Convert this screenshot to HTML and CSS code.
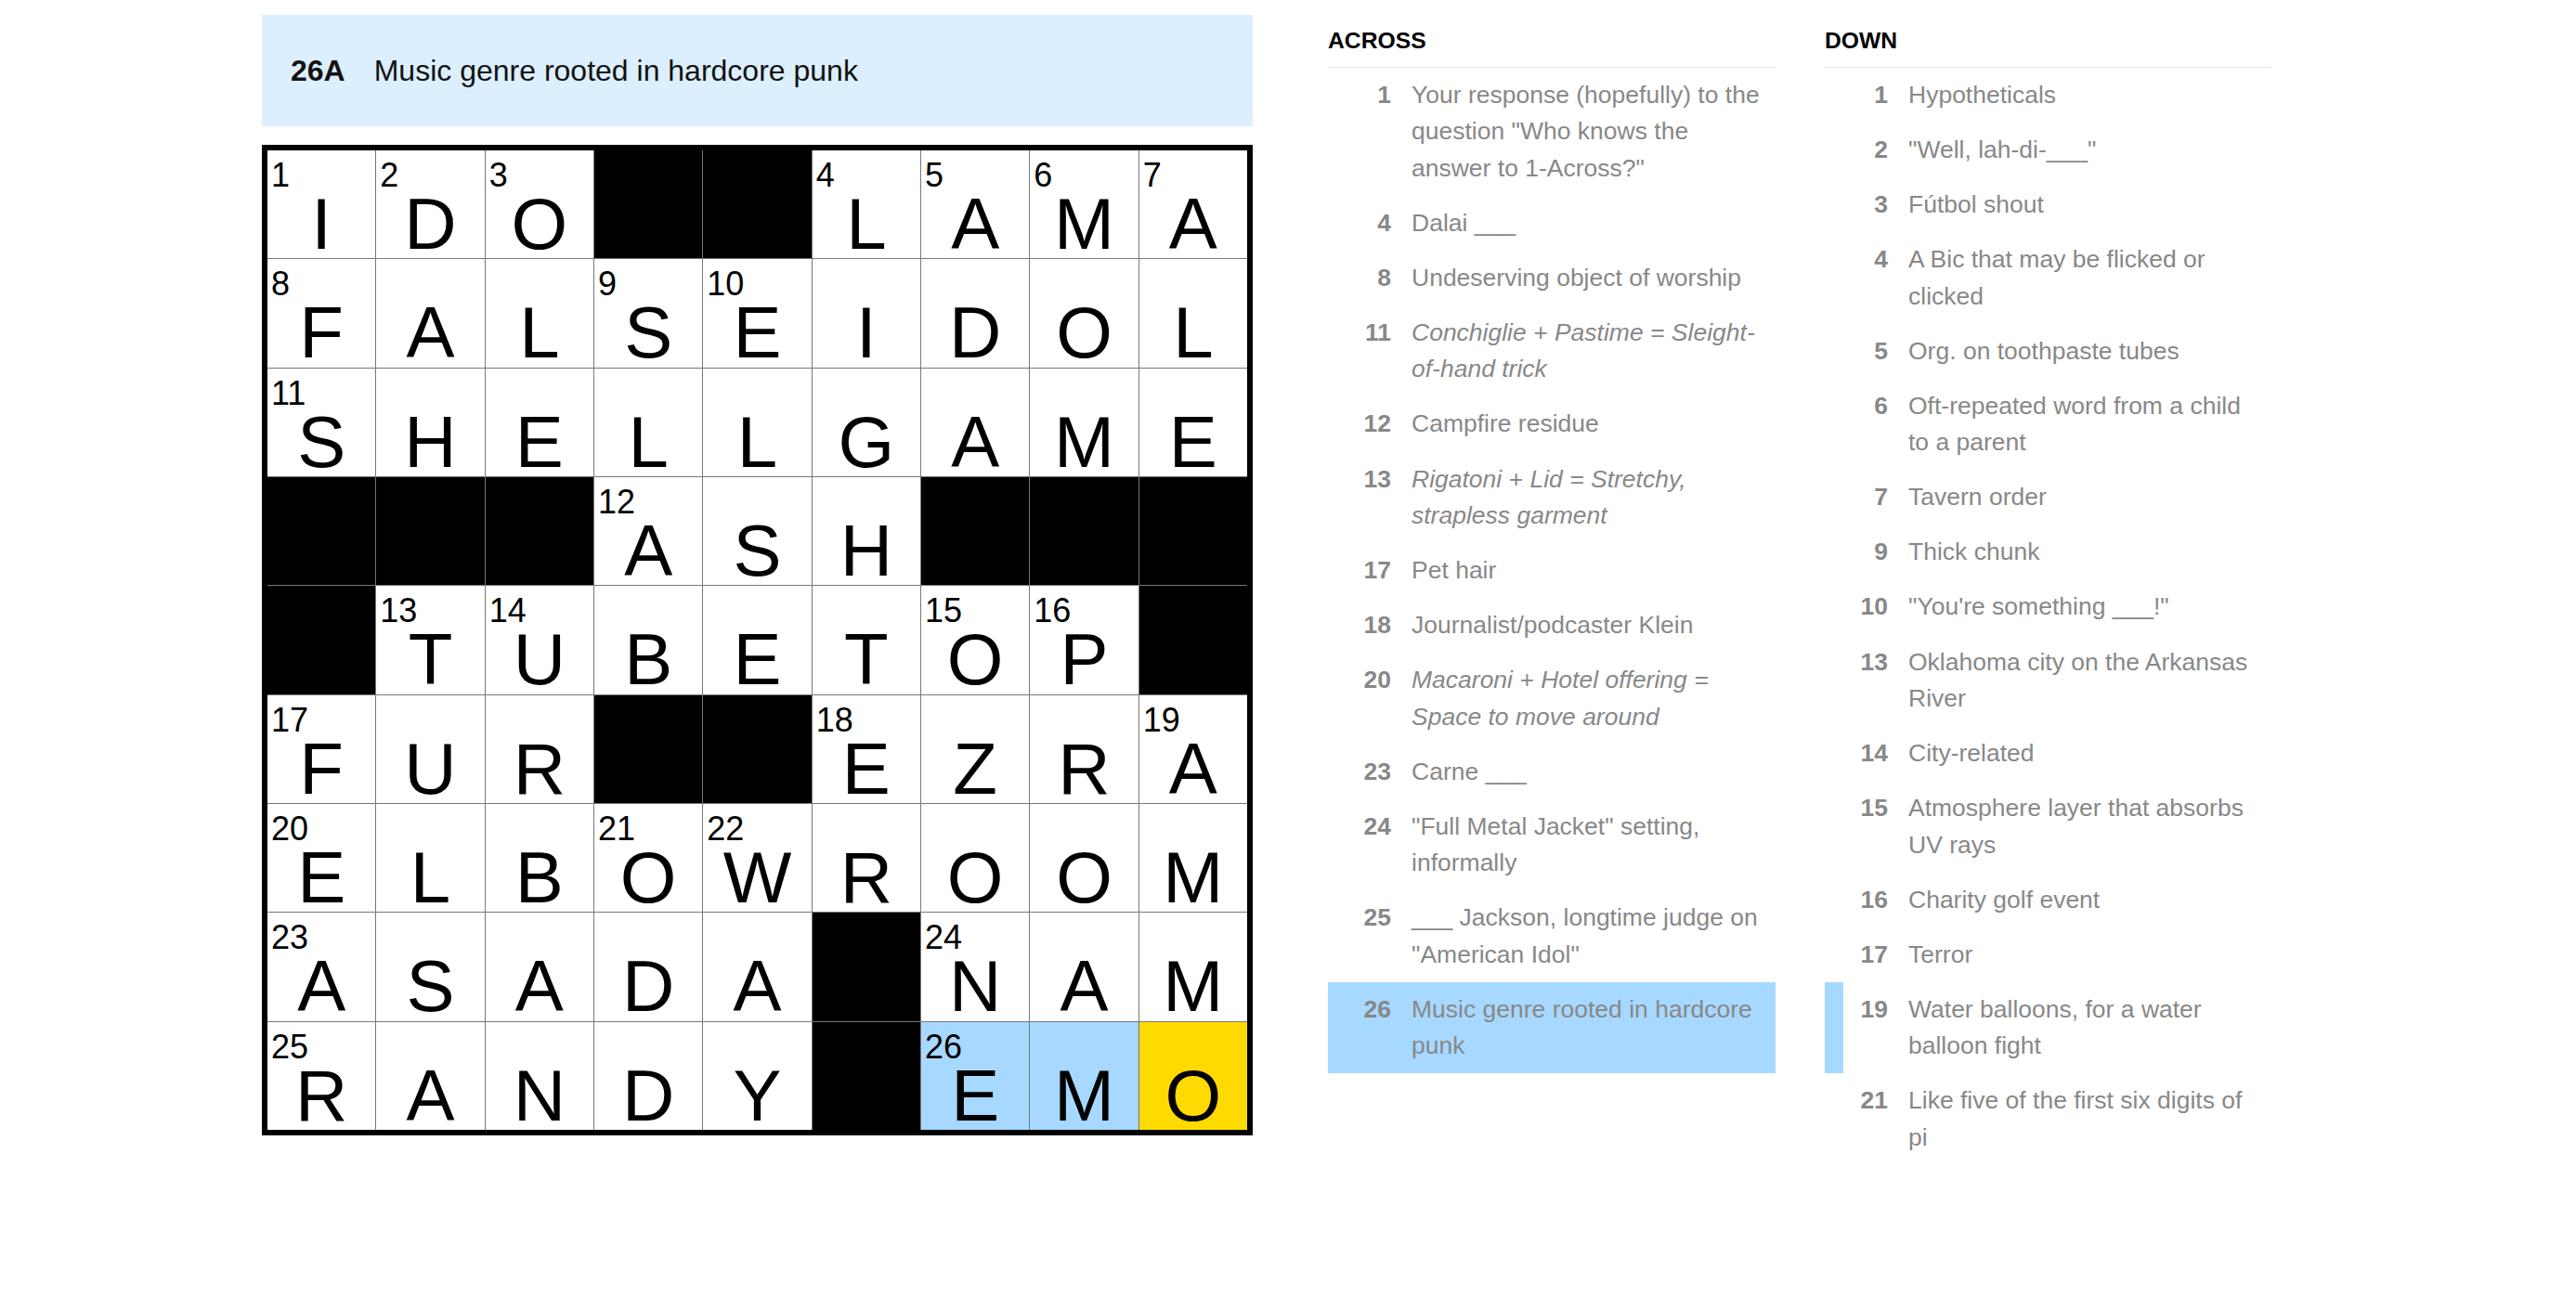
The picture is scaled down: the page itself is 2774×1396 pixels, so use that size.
FILE: index.html
```html
<!DOCTYPE html>
<html lang="en">
<head>
    <meta charset="UTF-8">
    <meta name="viewport" content="width=device-width, initial-scale=1.0">
    <title>Crossword</title>
    <link rel="stylesheet" href="styles.css">
</head>
<body>
    <div class="page">
        <div class="board">
            <div class="clue-bar">
                <span class="clue-bar-num">26A</span>
                <span class="clue-bar-text">Music genre rooted in hardcore punk</span>
            </div>
            <div class="grid" id="grid"></div>
        </div>

        <section class="clue-list">
            <h3 class="clue-list-title">Across</h3>
            <ol>
                <li class="clue"><span class="clue-label">1</span><span class="clue-text">Your response (hopefully) to the question "Who knows the answer to 1-Across?"</span></li>
                <li class="clue"><span class="clue-label">4</span><span class="clue-text">Dalai ___</span></li>
                <li class="clue"><span class="clue-label">8</span><span class="clue-text">Undeserving object of worship</span></li>
                <li class="clue"><span class="clue-label">11</span><span class="clue-text"><i>Conchiglie + Pastime = Sleight-of-hand trick</i></span></li>
                <li class="clue"><span class="clue-label">12</span><span class="clue-text">Campfire residue</span></li>
                <li class="clue"><span class="clue-label">13</span><span class="clue-text"><i>Rigatoni + Lid = Stretchy, strapless garment</i></span></li>
                <li class="clue"><span class="clue-label">17</span><span class="clue-text">Pet hair</span></li>
                <li class="clue"><span class="clue-label">18</span><span class="clue-text">Journalist/podcaster Klein</span></li>
                <li class="clue"><span class="clue-label">20</span><span class="clue-text"><i>Macaroni + Hotel offering = Space to move around</i></span></li>
                <li class="clue"><span class="clue-label">23</span><span class="clue-text">Carne ___</span></li>
                <li class="clue"><span class="clue-label">24</span><span class="clue-text">"Full Metal Jacket" setting, informally</span></li>
                <li class="clue"><span class="clue-label">25</span><span class="clue-text">___ Jackson, longtime judge on "American Idol"</span></li>
                <li class="clue clue-selected"><span class="clue-label">26</span><span class="clue-text">Music genre rooted in hardcore punk</span></li>
            </ol>
        </section>

        <section class="clue-list">
            <h3 class="clue-list-title">Down</h3>
            <ol>
                <li class="clue"><span class="clue-label">1</span><span class="clue-text">Hypotheticals</span></li>
                <li class="clue"><span class="clue-label">2</span><span class="clue-text">"Well, lah-di-___"</span></li>
                <li class="clue"><span class="clue-label">3</span><span class="clue-text">Fútbol shout</span></li>
                <li class="clue"><span class="clue-label">4</span><span class="clue-text">A Bic that may be flicked or clicked</span></li>
                <li class="clue"><span class="clue-label">5</span><span class="clue-text">Org. on toothpaste tubes</span></li>
                <li class="clue"><span class="clue-label">6</span><span class="clue-text">Oft-repeated word from a child to a parent</span></li>
                <li class="clue"><span class="clue-label">7</span><span class="clue-text">Tavern order</span></li>
                <li class="clue"><span class="clue-label">9</span><span class="clue-text">Thick chunk</span></li>
                <li class="clue"><span class="clue-label">10</span><span class="clue-text">"You're something ___!"</span></li>
                <li class="clue"><span class="clue-label">13</span><span class="clue-text">Oklahoma city on the Arkansas River</span></li>
                <li class="clue"><span class="clue-label">14</span><span class="clue-text">City-related</span></li>
                <li class="clue"><span class="clue-label">15</span><span class="clue-text">Atmosphere layer that absorbs UV rays</span></li>
                <li class="clue"><span class="clue-label">16</span><span class="clue-text">Charity golf event</span></li>
                <li class="clue"><span class="clue-label">17</span><span class="clue-text">Terror</span></li>
                <li class="clue clue-crossing"><span class="clue-label">19</span><span class="clue-text">Water balloons, for a water balloon fight</span></li>
                <li class="clue"><span class="clue-label">21</span><span class="clue-text">Like five of the first six digits of pi</span></li>
            </ol>
        </section>
    </div>

    <script>
        // Puzzle answers, '#' marks a black square
        const rows = [
            'IDO##LAMA',
            'FALSEIDOL',
            'SHELLGAME',
            '###ASH###',
            '#TUBETOP#',
            'FUR##EZRA',
            'ELBOWROOM',
            'ASADA#NAM',
            'RANDY#EMO'
        ];
        const size = rows.length;
        const activeWord = ['8,6', '8,7'];
        const activeCell = '8,8';

        function isOpen(r, c) {
            return r >= 0 && r < size && c >= 0 && c < size && rows[r][c] !== '#';
        }

        const grid = document.getElementById('grid');
        let num = 0;

        for (let r = 0; r < size; r++) {
            for (let c = 0; c < size; c++) {
                const cell = document.createElement('div');
                cell.className = 'cell';

                if (!isOpen(r, c)) {
                    cell.classList.add('cell-block');
                    grid.appendChild(cell);
                    continue;
                }

                const key = r + ',' + c;
                if (activeWord.includes(key)) cell.classList.add('cell-highlight');
                if (key === activeCell) cell.classList.add('cell-selected');

                // Number the cell if it starts an across or down entry
                const startsAcross = !isOpen(r, c - 1) && isOpen(r, c + 1);
                const startsDown = !isOpen(r - 1, c) && isOpen(r + 1, c);
                if (startsAcross || startsDown) {
                    num++;
                    const label = document.createElement('span');
                    label.className = 'cell-num';
                    label.textContent = num;
                    cell.appendChild(label);
                }

                const letter = document.createElement('span');
                letter.className = 'cell-letter';
                letter.textContent = rows[r][c];
                cell.appendChild(letter);

                grid.appendChild(cell);
            }
        }
    </script>
</body>
</html>
```

FILE: styles.css
```css
body {
    margin: 0;
    background: #fff;
    font-family: "Liberation Sans", Arial, sans-serif;
    color: #121212;
}
.page {
    display: flex;
    align-items: flex-start;
    padding: 16px 0 0 282px;
}
.board {
    width: 1067px;
    margin-right: 81px;
}

/* Clue bar above the grid */
.clue-bar {
    display: flex;
    align-items: center;
    height: 120px;
    padding-left: 31px;
    background: #dcefff;
    font-size: 32px;
}
.clue-bar-num {
    font-weight: bold;
    margin-right: 31px;
}

/* Grid */
.grid {
    display: grid;
    grid-template-columns: repeat(9, minmax(0, 1fr));
    grid-template-rows: repeat(9, minmax(0, 1fr));
    gap: 1px;
    width: 1067px;
    height: 1067px;
    margin-top: 20px;
    box-sizing: border-box;
    border: 6px solid #000;
    background: #787878;
}
.cell {
    position: relative;
    min-height: 0;
    background: #fff;
    text-align: center;
}
.cell-block {
    background: #000;
}
.cell-highlight {
    background: #a7d8ff;
}
.cell-selected {
    background: #ffda00;
}
.cell-num {
    position: absolute;
    top: 12px;
    left: 4px;
    font-size: 36px;
    line-height: 30px;
    color: #000;
}
.cell-letter {
    display: block;
    padding-top: 43px;
    font-size: 78px;
    line-height: 72px;
    color: #000;
}

/* Clue lists */
.clue-list {
    width: 482px;
    margin-right: 53px;
}
.clue-list-title {
    margin: 0;
    font-size: 24.7px;
    line-height: 56px;
    font-weight: bold;
    text-transform: uppercase;
    color: #000;
    border-bottom: 1px solid #e6e6e6;
}
.clue-list ol {
    list-style: none;
    margin: 0;
    padding: 0;
}
.clue {
    display: flex;
    align-items: baseline;
    padding: 9.85px 8px 9.85px 0;
    border-left: 20px solid transparent;
    font-size: 26.5px;
    line-height: 39.4px;
    color: #888;
}
.clue-label {
    flex: none;
    width: 48px;
    margin-right: 22px;
    text-align: right;
    font-weight: bold;
}
.clue-text {
    flex: 1;
}
.clue-selected {
    background: #a7d8ff;
}
.clue-crossing {
    border-left-color: #a7d8ff;
}
```
